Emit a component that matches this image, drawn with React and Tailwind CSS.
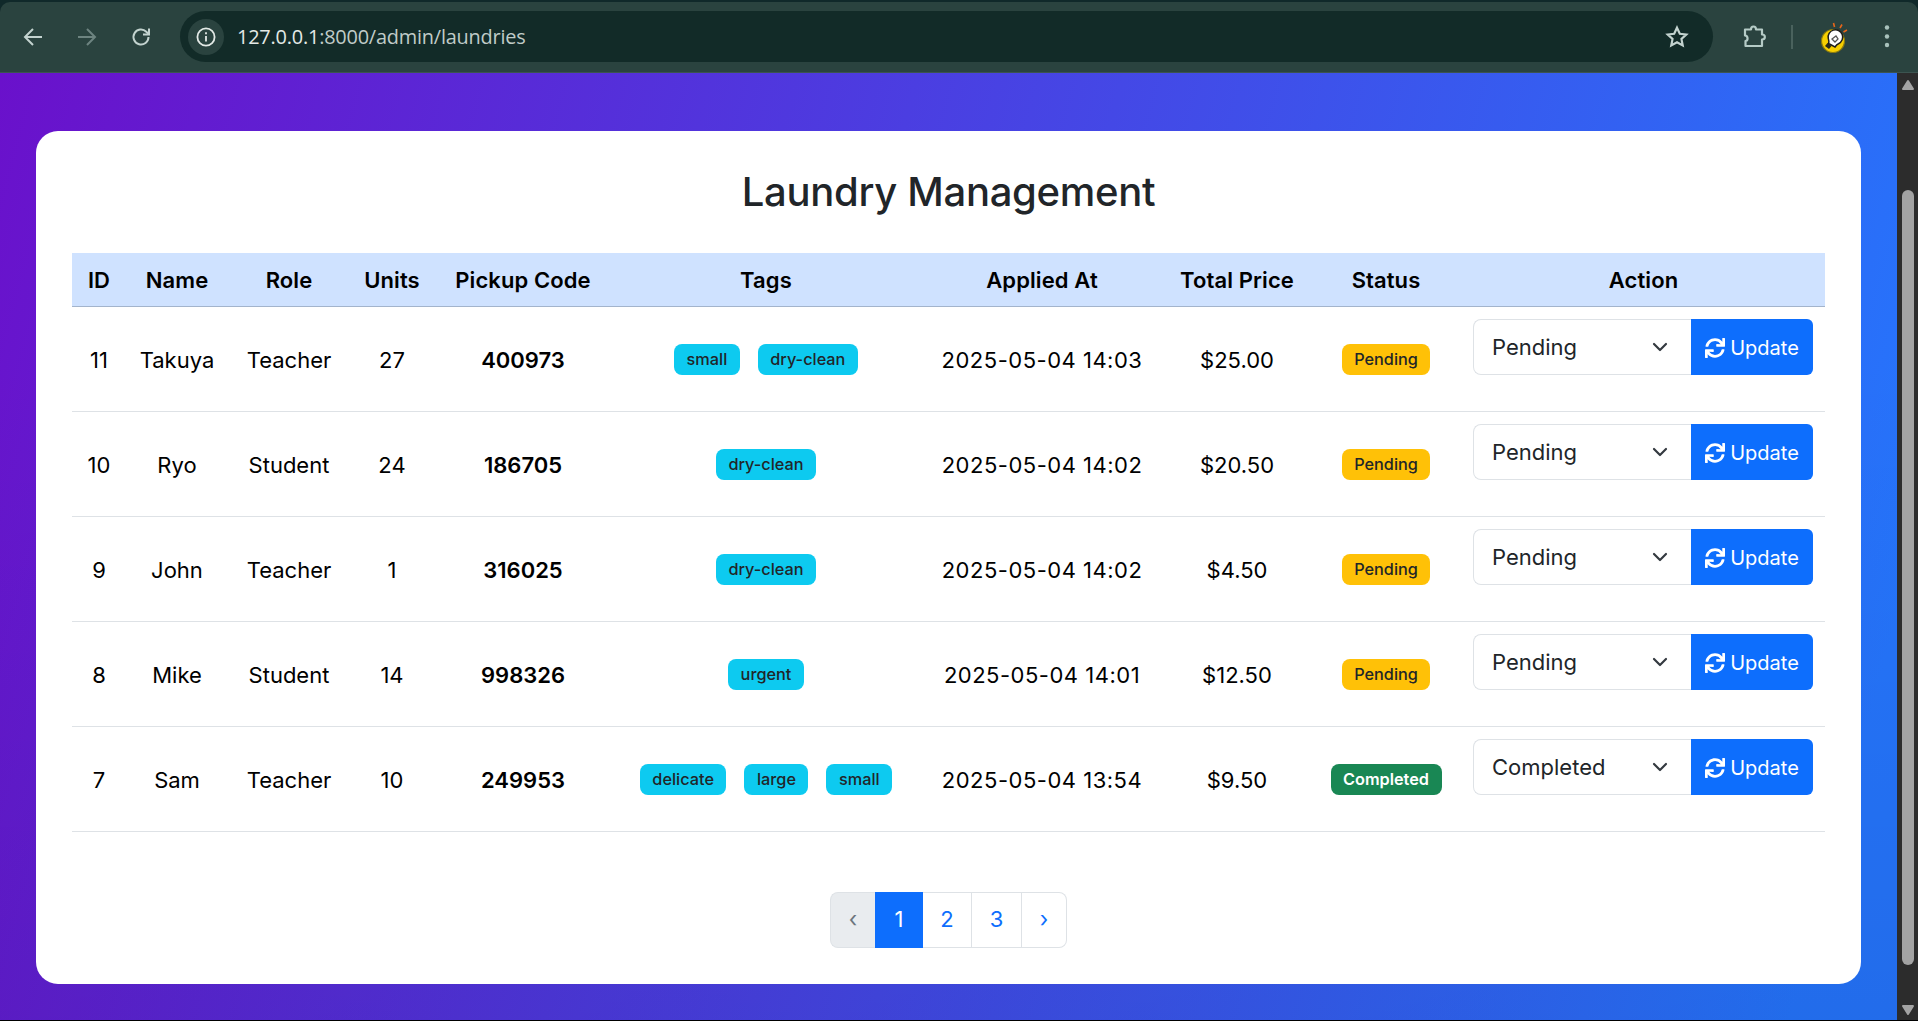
import React from "react";
import { FaSync } from "react-icons/fa";

const rows = [
  { id: 11, name: "Takuya", role: "Teacher", units: 27, code: "400973", tags: ["small", "dry-clean"], at: "2025-05-04 14:03", price: "$25.00", status: "Pending" },
  { id: 10, name: "Ryo", role: "Student", units: 24, code: "186705", tags: ["dry-clean"], at: "2025-05-04 14:02", price: "$20.50", status: "Pending" },
  { id: 9, name: "John", role: "Teacher", units: 1, code: "316025", tags: ["dry-clean"], at: "2025-05-04 14:02", price: "$4.50", status: "Pending" },
  { id: 8, name: "Mike", role: "Student", units: 14, code: "998326", tags: ["urgent"], at: "2025-05-04 14:01", price: "$12.50", status: "Pending" },
  { id: 7, name: "Sam", role: "Teacher", units: 10, code: "249953", tags: ["delicate", "large", "small"], at: "2025-05-04 13:54", price: "$9.50", status: "Completed" },
];

const heads = ["ID", "Name", "Role", "Units", "Pickup Code", "Tags", "Applied At", "Total Price", "Status", "Action"];
const widths = [54, 102, 122, 84, 178, 308, 244, 146, 152, 363];

function Chrome() {
  return (
    <div className="h-[73px] shrink-0 bg-[#10292a] pt-[2px]">
      <div className="flex h-[71px] items-center rounded-t-[10px] border-b border-[#3c5450] bg-[#2a433f] pb-[1px] text-[#c3d3cf]">
        <button className="ml-[18px] flex h-[30px] w-[30px] items-center justify-center">
          <svg width="24" height="24" viewBox="0 0 24 24" fill="none" stroke="#c3d3cf" strokeWidth="2"><path d="M21 12H4M12 4l-8 8 8 8" /></svg>
        </button>
        <button className="ml-[24px] flex h-[30px] w-[30px] items-center justify-center">
          <svg width="24" height="24" viewBox="0 0 24 24" fill="none" stroke="#6d8480" strokeWidth="2"><path d="M3 12h17M12 4l8 8-8 8" /></svg>
        </button>
        <button className="ml-[24px] flex h-[30px] w-[30px] items-center justify-center">
          <svg width="24" height="24" viewBox="0 0 24 24" fill="none" stroke="#c3d3cf" strokeWidth="2"><path d="M19.5 12a7.5 7.5 0 1 1-2.2-5.3L20 9.4" /><path d="M20 3.5v6h-6" /></svg>
        </button>
        <div className="ml-[24px] flex h-[51px] w-[1533px] items-center rounded-full bg-[#122b28] pl-[8px]">
          <div className="flex h-[36px] w-[36px] items-center justify-center rounded-full bg-[#2a433f]">
            <svg width="22" height="22" viewBox="0 0 22 22" fill="none" stroke="#e3e9e6" strokeWidth="1.8"><circle cx="11" cy="11" r="8.6" /><path d="M11 10v5.5M11 6.3v1.9" /></svg>
          </div>
          <span className="ml-[13px] font-['Open_Sans',sans-serif] text-[19.9px] tracking-[-0.2px] text-[#e3e9e6]">
            127.0.0.1<span className="text-[#c0ccc8]">:8000/admin/laundries</span>
          </span>
          <svg className="ml-auto mr-[23px]" width="26" height="26" viewBox="0 0 24 24" fill="none" stroke="#c3d3cf" strokeWidth="2"><path d="M12 3.4l2.6 5.6 6 .7-4.5 4.1 1.2 6L12 16.8l-5.3 3 1.2-6-4.5-4.1 6-.7z" /></svg>
        </div>
        <svg className="ml-[28px]" width="26" height="26" viewBox="0 0 26 26" fill="none" stroke="#b5cbc6" strokeWidth="2.2" strokeLinejoin="round"><path d="M4 5.5h6c0-4 5-4 5 0h6v5c3.800 0 3.800 5 0 5v6.500H4.500v-5c2.800-.3 2.800-5.200-.5-5.500z" /></svg>
        <div className="ml-[24px] h-[24px] w-[2px] bg-[#4a625d]" />
        <svg className="ml-[27px] mt-[2px] shrink-0" width="28" height="32" viewBox="0 0 28 32">
          <circle cx="13" cy="19" r="11.500" fill="#f7cf00" stroke="#8a7a10" strokeWidth="1.200" />
          <path d="M9 27l-4-3 2.500-3 4 3z" fill="#2a2a1a" />
          <path d="M8.500 21.500c1-2 .2-3-.2-4.800a7.300 7.300 0 1 1 10.200 5c-1.500.6-2.300 1.500-3.500 3.300z" fill="#fff" stroke="#1c1c1c" strokeWidth="1.500" />
          <path d="M12 17l4-3 2 3-3 3z" fill="none" stroke="#555" strokeWidth="1.300" />
          <path d="M14.500 5l-1-4M20 6l2-3.500M23.500 10l3.500-2" stroke="#e8651a" strokeWidth="1.600" fill="none" />
        </svg>
        <svg className="ml-[36px] shrink-0" width="6" height="26" viewBox="0 0 6 26" fill="#a9c2bc"><circle cx="3" cy="3.500" r="2.200" /><circle cx="3" cy="12.500" r="2.200" /><circle cx="3" cy="21" r="2.200" /></svg>
      </div>
    </div>
  );
}

function Scrollbar() {
  return (
    <div className="flex w-[21px] shrink-0 flex-col items-center bg-[#2c2c2c]">
      <svg className="mt-[6px]" width="14" height="12" viewBox="0 0 14 12" fill="#a3a3a3" stroke="#a3a3a3" strokeWidth="2" strokeLinejoin="round"><path d="M7 2l5 8H2z" /></svg>
      <div className="mt-[99px] h-[775px] w-[12px] rounded-full bg-[#a3a3a3]" />
      <svg className="mt-[39px]" width="14" height="12" viewBox="0 0 14 12" fill="#a3a3a3" stroke="#a3a3a3" strokeWidth="2" strokeLinejoin="round"><path d="M7 10l5-8H2z" /></svg>
    </div>
  );
}

function Badge({ children, className }) {
  return (
    <span className={`inline-flex h-[31px] items-center rounded-[8px] px-[12.500px] text-[16.300px] font-medium ${className}`}>
      {children}
    </span>
  );
}

function Row({ r }) {
  const base = "border-b border-[#dee2e6] p-0 text-center align-middle";
  const td = `${base} pt-[4px]`;
  const badgeTd = `${base} pt-[2px]`;
  return (
    <tr className="h-[105px]">
      <td className={td}>{r.id}</td>
      <td className={td}>{r.name}</td>
      <td className={td}>{r.role}</td>
      <td className={td}>{r.units}</td>
      <td className={`${td} font-semibold`}>{r.code}</td>
      <td className={badgeTd}>
        <div className="flex justify-center gap-[18px]">
          {r.tags.map((t) => (
            <Badge key={t} className="bg-[#0dcaf0] text-[#212529]">{t}</Badge>
          ))}
        </div>
      </td>
      <td className={`${td} tracking-[0.5px]`}>{r.at}</td>
      <td className={td}>{r.price}</td>
      <td className={badgeTd}>
        <div className="flex justify-center">
          <Badge className={r.status === "Pending" ? "bg-[#ffc107] text-[#212529]" : "bg-[#198754] font-semibold text-white"}>{r.status}</Badge>
        </div>
      </td>
      <td className="border-b border-[#dee2e6] pl-[11px] pr-[12px] pt-[12px] pb-[36px] align-top">
        <div className="flex h-[56px] font-['Inter',sans-serif]">
          <div className="relative flex-1">
            <select defaultValue={r.status} className="h-full w-full appearance-none rounded-l-[8px] border border-r-0 border-[#dee2e6] bg-white pl-[18px] pt-[2px] text-[22px] text-[#212529] outline-none">
              <option>Pending</option>
              <option>Completed</option>
            </select>
            <svg className="pointer-events-none absolute right-[22px] top-[21px]" width="18" height="14" viewBox="0 0 18 14" fill="none" stroke="#343a40" strokeWidth="2.200" strokeLinecap="round" strokeLinejoin="round"><path d="M3 4l6 6 6-6" /></svg>
          </div>
          <button className="flex w-[122px] items-center justify-center gap-[5px] rounded-r-[6px] bg-[#0d6efd] pt-[2px] text-[20px] text-white">
            <FaSync className="h-[20px] w-[20px]" />
            Update
          </button>
        </div>
      </td>
    </tr>
  );
}

function Pagination() {
  const cell = "flex h-[56px] items-center justify-center text-[22px]";
  return (
    <nav className="mt-[60px] flex justify-center font-['Inter',sans-serif]">
      <a className={`${cell} w-[45px] rounded-l-[8px] border border-r-0 border-[#dee2e6] bg-[#e9ecef] text-[#6c757d]`}>‹</a>
      <a className={`${cell} w-[48px] bg-[#0d6efd] text-white`}>1</a>
      <a className={`${cell} w-[49px] border-y border-r border-[#dee2e6] text-[#0d6efd]`}>2</a>
      <a className={`${cell} w-[50px] border-y border-r border-[#dee2e6] text-[#0d6efd]`}>3</a>
      <a className={`${cell} w-[45px] rounded-r-[8px] border-y border-r border-[#dee2e6] text-[#0d6efd]`}>›</a>
    </nav>
  );
}

export default function App() {
  return (
    <div className="flex h-[1021px] flex-col overflow-hidden border-b border-black bg-black">
      <Chrome />
      <div className="flex min-h-0 flex-1">
        <main className="min-w-0 flex-1 bg-[linear-gradient(to_bottom,transparent_30%,rgba(0,0,30,0.08)),linear-gradient(105deg,#6a11cb,#2575fc_95%)] px-[36px] pt-[58px]">
          <div className="h-[853px] rounded-[22px] bg-white p-[36px] font-['Inter',sans-serif] text-[22px] text-black">
            <h2 className="mt-[1px] mb-[37px] text-center text-[40px] leading-[48px] font-[550] tracking-[-0.3px] text-[#212529]">Laundry Management</h2>
            <table className="w-full table-fixed border-collapse">
              <colgroup>
                {widths.map((w, i) => <col key={i} style={{ width: w }} />)}
              </colgroup>
              <thead>
                <tr className="h-[53px] bg-[#cfe2ff]">
                  {heads.map((h) => (
                    <th key={h} className="border-b border-[#a3b4cc] p-0 pt-[3px] text-center font-semibold tracking-[0.1px]">{h}</th>
                  ))}
                </tr>
              </thead>
              <tbody>
                {rows.map((r) => <Row key={r.id} r={r} />)}
              </tbody>
            </table>
            <Pagination />
          </div>
        </main>
        <Scrollbar />
      </div>
    </div>
  );
}
